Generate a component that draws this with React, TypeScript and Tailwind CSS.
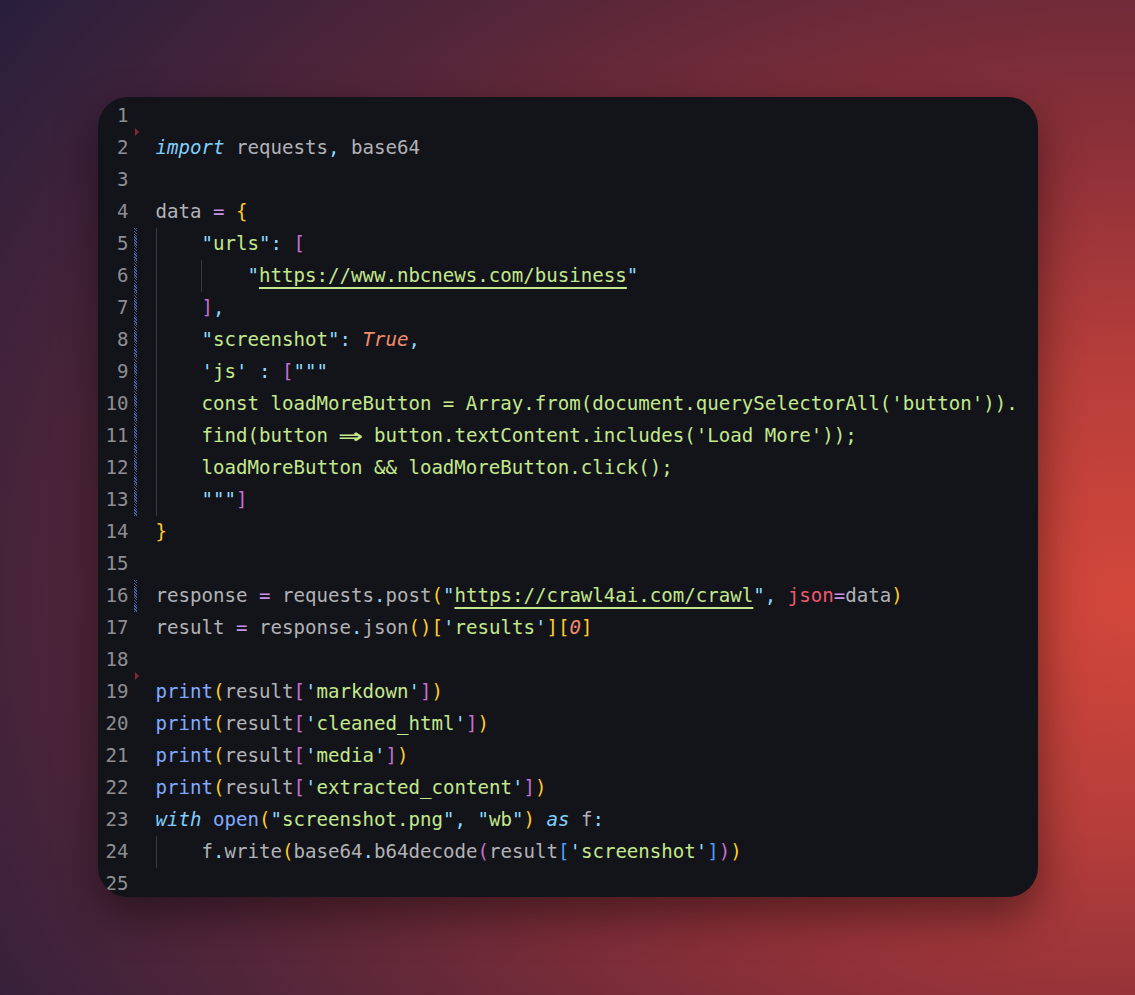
type Tok = [string, string]

const D = "text-[#b2b2b6]"
const G = "text-[#c3e88d]"
const LB = "text-[#89ddff]"
const P = "text-[#c792ea]"
const Y = "text-[#ffcb2b]"
const M = "text-[#c86fd0]"
const B = "text-[#82aaff]"
const BB = "text-[#4a9ff2]"
const S = "text-[#f28c6c] italic"
const R = "text-[#f0596c]"
const KW = "text-[#7fd0ff] italic"
const URL = "text-[#c3e88d] underline decoration-2 underline-offset-[5px] decoration-[#c3e88d]"
const ARROW = "text-[#c3e88d] inline-block w-[23px] text-center font-['DejaVu_Sans'] text-[20px] scale-x-[1.5] font-bold"

interface Line {
  indent?: number
  bar?: boolean
  marker?: boolean
  tokens: Tok[]
}

const printLine = (key: string): Line => ({
  tokens: [
    ["print", B],
    ["(", Y],
    ["result", D],
    ["[", M],
    ["'", LB],
    [key, G],
    ["'", LB],
    ["]", M],
    [")", Y],
  ],
})

const lines: Line[] = [
  { tokens: [] },
  {
    marker: true,
    tokens: [
      ["import", KW],
      [" requests", D],
      [",", LB],
      [" base64", D],
    ],
  },
  { tokens: [] },
  {
    tokens: [
      ["data", D],
      [" = ", P],
      ["{", Y],
    ],
  },
  {
    indent: 1,
    bar: true,
    tokens: [
      ['"', LB],
      ["urls", G],
      ['"', LB],
      [":", LB],
      [" ", D],
      ["[", M],
    ],
  },
  {
    indent: 2,
    bar: true,
    tokens: [
      ['"', LB],
      ["https://www.nbcnews.com/business", URL],
      ['"', LB],
    ],
  },
  {
    indent: 1,
    bar: true,
    tokens: [
      ["]", M],
      [",", LB],
    ],
  },
  {
    indent: 1,
    bar: true,
    tokens: [
      ['"', LB],
      ["screenshot", G],
      ['"', LB],
      [":", LB],
      [" ", D],
      ["True", S],
      [",", LB],
    ],
  },
  {
    indent: 1,
    bar: true,
    tokens: [
      ["'", LB],
      ["js", G],
      ["'", LB],
      [" ", D],
      [":", LB],
      [" ", D],
      ["[", M],
      ['"""', LB],
    ],
  },
  {
    indent: 1,
    bar: true,
    tokens: [["const loadMoreButton = Array.from(document.querySelectorAll('button')).", G]],
  },
  {
    indent: 1,
    bar: true,
    tokens: [
      ["find(button ", G],
      ["⇒", ARROW],
      [" button.textContent.includes('Load More'));", G],
    ],
  },
  {
    indent: 1,
    bar: true,
    tokens: [["loadMoreButton && loadMoreButton.click();", G]],
  },
  {
    indent: 1,
    bar: true,
    tokens: [
      ['"""', LB],
      ["]", M],
    ],
  },
  { tokens: [["}", Y]] },
  { tokens: [] },
  {
    bar: true,
    tokens: [
      ["response", D],
      [" = ", P],
      ["requests", D],
      [".", LB],
      ["post", D],
      ["(", Y],
      ['"', LB],
      ["https://crawl4ai.com/crawl", URL],
      ['"', LB],
      [", ", LB],
      ["json", R],
      ["=", P],
      ["data", D],
      [")", Y],
    ],
  },
  {
    tokens: [
      ["result", D],
      [" = ", P],
      ["response", D],
      [".", LB],
      ["json", D],
      ["()", Y],
      ["[", Y],
      ["'", LB],
      ["results", G],
      ["'", LB],
      ["][", Y],
      ["0", S],
      ["]", Y],
    ],
  },
  { tokens: [] },
  { marker: true, ...printLine("markdown") },
  printLine("cleaned_html"),
  printLine("media"),
  printLine("extracted_content"),
  {
    tokens: [
      ["with", KW],
      [" ", D],
      ["open", B],
      ["(", Y],
      ['"', LB],
      ["screenshot.png", G],
      ['"', LB],
      [", ", LB],
      ['"', LB],
      ["wb", G],
      ['"', LB],
      [")", Y],
      [" ", D],
      ["as", KW],
      [" f", D],
      [":", LB],
    ],
  },
  {
    indent: 1,
    tokens: [
      ["f", D],
      [".", LB],
      ["write", D],
      ["(", Y],
      ["base64", D],
      [".", LB],
      ["b64decode", D],
      ["(", M],
      ["result", D],
      ["[", BB],
      ["'", LB],
      ["screenshot", G],
      ["'", LB],
      ["]", BB],
      [")", M],
      [")", Y],
    ],
  },
  { tokens: [] },
]

const CodeLine = ({ line, n }: { line: Line; n: number }) => {
  return (
    <div className="flex h-[32px] leading-[32px]">
      {/* Number */}
      <div className="w-[31px] shrink-0 text-right text-[#8e8e93]">{n}</div>

      {/* Gutter */}
      <div className="relative w-[27px] shrink-0">
        {line.bar && (
          <div className="ml-[5px] h-full w-[3px] bg-[repeating-linear-gradient(45deg,#4660a8_0px,#4660a8_1px,#15161c_1px,#15161c_2px)]" />
        )}
        {line.marker && (
          <div className="absolute left-[6px] top-[-4px] h-0 w-0 border-y-[4px] border-l-[4px] border-y-transparent border-l-[#7b2a36]" />
        )}
      </div>

      {/* Code */}
      <div className="flex whitespace-pre">
        {Array.from({ length: line.indent ?? 0 }).map((_, i) => (
          <span key={i} className="inline-block h-full w-[4ch] shrink-0 border-l border-[#3a3b42]" />
        ))}
        {line.tokens.map(([text, cls], i) => (
          <span key={i} className={cls}>
            {text}
          </span>
        ))}
      </div>
    </div>
  )
}

const App = () => {
  return (
    <div className="flex h-[995px] w-full justify-center overflow-hidden bg-[radial-gradient(ellipse_140%_120%_at_100%_60%,#d3473a_0%,#b53d3a_20%,#8c3038_38%,#5a2739_60%,#1f1d3c_92%)] pt-[97px]">
      <div
        className="h-[800px] w-[940px] overflow-hidden rounded-[30px] bg-[#131419] pt-[3px] text-[19.1px] shadow-[0_18px_45px_rgba(0,0,0,0.45)]"
        style={{ fontFamily: '"DejaVu Sans Mono", "Liberation Mono", monospace' }}
      >
        {lines.map((line, i) => (
          <CodeLine key={i} line={line} n={i + 1} />
        ))}
      </div>
    </div>
  )
}

export default App
